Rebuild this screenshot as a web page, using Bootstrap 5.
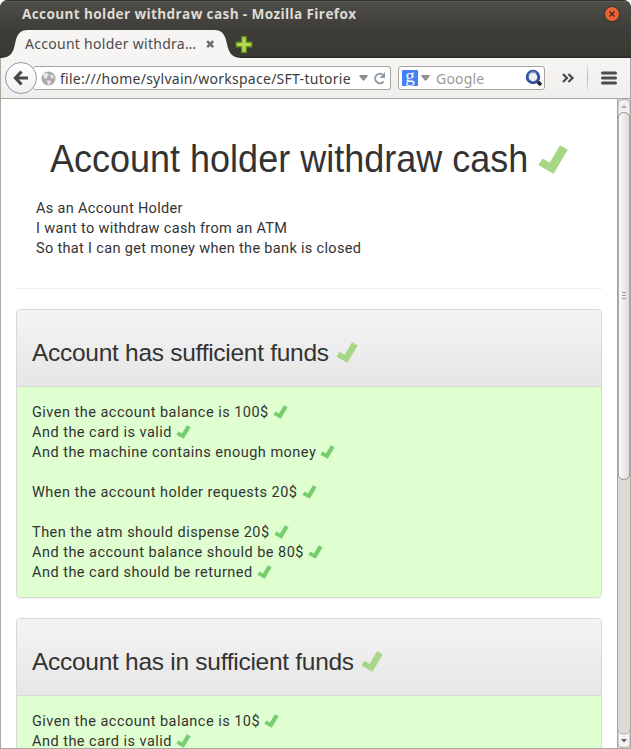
<!DOCTYPE html>
<html lang="en">
<head>
<meta charset="utf-8">
<title>Account holder withdraw cash</title>
<link href="https://cdn.jsdelivr.net/npm/bootstrap@5.3.0/dist/css/bootstrap.min.css" rel="stylesheet">
<style>
html, body { height: 100%; margin: 0; overflow: hidden; background: #fff; }
.win { height: 749px; width: 631px; border-radius: 8px 8px 0 0; overflow: hidden; font-family: "Noto Sans", sans-serif; position: relative; background: #3c3b37; }
.titlebar { height: 29px; padding: 0 11px 0 22px; background: linear-gradient(#33322e 0 1px, #5c5b55 1px 2px, #4e4d48 2px, #3e3d39); color: #dfdbd2; font: 700 13.6px/26px "Open Sans", "Noto Sans", sans-serif; letter-spacing: .37px; }
.titlebar span { padding-bottom: 2px; }
.titlebar svg { margin-top: -1px; }
.tabs { height: 29px; background: linear-gradient(#3e3d39, #3a3934 27px, #2b2a27 28px); }
.tab-wrap { width: 240px; height: 29px; margin-left: 1px; position: relative; }
.tab-shape { position: absolute; inset: 0; }
.tab-label { position: relative; padding-left: 24px; width: 197px; font-size: 14px; letter-spacing: .28px; line-height: 29px; color: #4c4c4c; white-space: nowrap; }
.toolbar { height: 41px; background: linear-gradient(#f6f5f3, #f0efed); border: 1px solid #aea79f; border-top: 0; border-bottom-color: #a9a59f; color: #3c3c3c; }
.field { height: 24px; background: #fff; border: 1px solid #a9a49e; border-radius: 3px; font-size: 14px; line-height: 23px; }
.url { width: 358px; padding-left: 8px; margin-left: -4px; border-left: 0; letter-spacing: .27px; }
.search { width: 147px; margin-left: 7px; padding-left: 3px; }
.g-logo { width: 16px; height: 16px; background: #4680f8; border-radius: 1px; color: #fff; font: 19px/11px "Liberation Serif", serif; text-align: center; }
.back { width: 32px; height: 32px; border-radius: 50%; border: 1px solid #8f9aa9; background: linear-gradient(#fff, #f0f0f0); margin-left: 4px; z-index: 1; }
.divider { width: 1px; height: 32px; background: linear-gradient(transparent, #b5b1ac, transparent); }
.view { height: 650px; border: 1px solid #aea79f; border-top: 0; background: #fff; }
.page { width: 616px; overflow: hidden; padding: 40px 15px 0; color: #333; font-family: Roboto, sans-serif; font-size: 14.5px; line-height: 20px; }
.page h1, .page h3 { font-family: "Liberation Sans", Arial, sans-serif; line-height: 40px; font-weight: 400; margin: 0; color: #333; white-space: nowrap; }
.page h1 { font-size: 38.5px; padding-left: 34px; height: 40px; }
.page h1 span { display: inline-block; transform: scaleX(.935); transform-origin: left; margin-right: -33px; }
.page h3 { font-size: 24.5px; letter-spacing: -.28px; }
.story { padding: 20px 20px 29px; border-bottom: 1px solid #eee; letter-spacing: .33px; }
.scenario { border: 1px solid #d8d8d8; border-radius: 4px; margin-top: 20px; box-shadow: 0 1px 1px rgba(0,0,0,.05); overflow: hidden; }
.scenario header { height: 77px; padding: 23px 15px 0; border-bottom: 1px solid #d8d8d8; background: linear-gradient(#f4f4f4, #e6e6e6); }
.steps { background: #dfffd0; padding: 16px 15px 14px; letter-spacing: .48px; }
.steps div { height: 20px; white-space: nowrap; }
.tick-l { width: 30px; height: 29px; vertical-align: -2px; fill: #a6d785; margin-left: -1px; }
.tick-m { width: 22px; height: 21px; vertical-align: -2px; fill: #a6d785; margin-left: 1px; }
.tick-s { width: 15px; height: 14px; vertical-align: -2px; fill: #77cd6f; }
.scroll { width: 13px; background: #dcdad7; border-left: 1px solid #a5a19b; }
</style>
</head>
<body>
<svg class="d-none"><symbol id="tick" viewBox="0 0 30 29"><path d="M22 .3 29.800 4.800 15.500 28.700.3 20 4.600 13.600 11.700 17.800Z"/></symbol></svg>
<div class="win d-flex flex-column">
  <div class="titlebar d-flex justify-content-between align-items-center">
    <span>Account holder withdraw cash - Mozilla Firefox</span>
    <svg width="16" height="16" viewBox="0 0 16 16"><circle cx="8" cy="8" r="7.5" fill="#ed6138" stroke="#35332f"/><path d="M5.5 5.5l5 5m0-5l-5 5" stroke="#45261c" stroke-width="1.4"/></svg>
  </div>
  <div class="tabs d-flex">
    <div class="tab-wrap">
      <svg class="tab-shape" width="240" height="29"><path d="M0 29C10 28 12 24 14 15 16 5 19 1 27 1H213c8 0 11 4 13 14 2 9 4 13 14 14z" fill="#f6f5f3"/></svg>
      <div class="tab-label">Account holder withdra…</div>
      <svg class="position-absolute" style="left:205px;top:11px" width="9" height="9"><path d="M1.2 1.2l6 6m0-6l-6 6" stroke="#696969" stroke-width="2.4"/></svg>
    </div>
    <svg style="margin:7px 0 0 -6px" width="18" height="17" viewBox="0 0 18 17"><path d="M6.700.7h4.600v5.500h5.500v4.600h-5.500v5.500H6.700v-5.500H1.200V6.200h5.500z" fill="#b5d94a" stroke="#5d8c1c" stroke-width="1.200"/></svg>
  </div>
  <div class="toolbar d-flex align-items-center">
    <div class="back d-flex align-items-center justify-content-center flex-shrink-0"><svg width="16" height="16" viewBox="0 0 16 16"><path d="M8.500 1.500 2.500 8l6 6.500M3 8h12" fill="none" stroke="#484848" stroke-width="3.200"/></svg></div>
    <div class="field url d-flex align-items-center flex-shrink-0">
      <svg class="flex-shrink-0" width="15" height="15" viewBox="0 0 15 15"><circle cx="7.500" cy="7.500" r="7" fill="#aaa"/><path d="M2 3l4-1 2 2-2 2 0 2-3-1zM9 3l4 2-1 3-2-1zM6 9l4 1-1 3-2 1z" fill="#e9e9e9"/></svg>
      <span class="text-nowrap" style="margin-left:4px">file:///home/sylvain/workspace/SFT-tutorie</span>
      <svg class="ms-auto" width="9" height="6"><path d="M.7.700h7.600L4.500 5.500z" fill="#999" stroke="#777"/></svg>
      <svg style="margin:0 4px 0 5px" width="13" height="13" viewBox="0 0 13 13"><path d="M10.500 9.500A4.700 4.700 0 1 1 9.500 2.600" fill="none" stroke="#8f9ba6" stroke-width="2"/><path d="M12 0v6H6.500z" fill="#8f9ba6"/></svg>
    </div>
    <div class="field search d-flex align-items-center flex-shrink-0">
      <span class="g-logo">g</span>
      <svg style="margin-left:3px" width="9" height="6"><path d="M.7.700h7.600L4.500 5.500z" fill="#999" stroke="#777"/></svg>
      <span style="margin-left:6px;color:#999;letter-spacing:.2px">Google</span>
      <svg class="ms-auto" style="margin-right:1px" width="18" height="18" viewBox="0 0 18 18"><path d="M12 12l4 4" stroke="#2e2520" stroke-width="3.500"/><circle cx="8" cy="8" r="5.800" fill="#eee" stroke="#324da3" stroke-width="2.800"/><path d="M3.500 6a5 5 0 0 1 8-2" fill="none" stroke="#839bd5"/></svg>
    </div>
    <svg style="margin-left:17px" width="12" height="10" viewBox="0 0 12 10"><path d="M1 1l4 4-4 4M6.500 1l4 4-4 4" fill="none" stroke="#484848" stroke-width="2.200"/></svg>
    <span class="divider" style="margin-left:13px"></span>
    <svg style="margin-left:13px" width="16" height="14"><path d="M1.500 2h13M1.500 7h13M1.500 12h13" stroke="#4c4c4c" stroke-width="3" stroke-linecap="round"/></svg>
  </div>
  <div class="view d-flex">
    <main class="page flex-shrink-0">
      <h1><span>Account holder withdraw cash</span> <svg class="tick-l"><use href="#tick"/></svg></h1>
      <div class="story">
        <div>As an Account Holder</div>
        <div>I want to withdraw cash from an ATM</div>
        <div>So that I can get money when the bank is closed</div>
      </div>
      <section class="scenario">
        <header><h3>Account has sufficient funds <svg class="tick-m"><use href="#tick"/></svg></h3></header>
        <div class="steps">
          <div>Given the account balance is 100$ <svg class="tick-s"><use href="#tick"/></svg></div>
          <div>And the card is valid <svg class="tick-s"><use href="#tick"/></svg></div>
          <div>And the machine contains enough money <svg class="tick-s"><use href="#tick"/></svg></div>
          <div></div>
          <div>When the account holder requests 20$ <svg class="tick-s"><use href="#tick"/></svg></div>
          <div></div>
          <div>Then the atm should dispense 20$ <svg class="tick-s"><use href="#tick"/></svg></div>
          <div>And the account balance should be 80$ <svg class="tick-s"><use href="#tick"/></svg></div>
          <div>And the card should be returned <svg class="tick-s"><use href="#tick"/></svg></div>
        </div>
      </section>
      <section class="scenario">
        <header><h3>Account has in sufficient funds <svg class="tick-m"><use href="#tick"/></svg></h3></header>
        <div class="steps">
          <div>Given the account balance is 10$ <svg class="tick-s"><use href="#tick"/></svg></div>
          <div>And the card is valid <svg class="tick-s"><use href="#tick"/></svg></div>
        </div>
      </section>
    </main>
    <div class="scroll flex-shrink-0">
      <svg class="d-block" width="12" height="649" viewBox="0 0 12 649">
        <defs><linearGradient id="thumb"><stop stop-color="#fbfbfa"/><stop offset="1" stop-color="#dcdad7"/></linearGradient></defs>
        <rect width="12" height="649" fill="#dcdad7"/>
        <path d="M0 18V6q0-5.500 6-5.500T12 6v12z" fill="#f2f1f0" stroke="#b5b1ac"/><path d="M3 9h6L6 6z" fill="#aaa"/>
        <rect x=".2" y="13.500" width="11.600" height="367" rx="5.500" fill="url(#thumb)" stroke="#949089"/>
        <path d="M4 193.500h4M4 196.500h4M4 199.500h4" stroke="#999"/>
        <path d="M0 630q0 5 6 5t6-5v14q0 4.500-6 4.500T0 644z" fill="#f5f4f3" stroke="#b5b1ac"/><path d="M3 640h6l-3 3.500z" fill="#666"/>
      </svg>
    </div>
  </div>
</div>
<script src="https://cdn.jsdelivr.net/npm/bootstrap@5.3.0/dist/js/bootstrap.bundle.min.js"></script>
</body>
</html>
